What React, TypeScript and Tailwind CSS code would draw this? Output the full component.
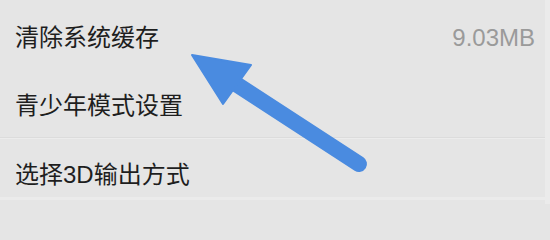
import React from "react";

const font = { fontFamily: '"Liberation Sans", "Noto Sans CJK SC", sans-serif' };

export default function App() {
  return (
    <div className="relative w-full min-w-[550px] min-h-screen bg-[#e5e5e5]" style={font}>
      <div className="relative w-[550px] h-[204px] overflow-hidden">
        <div className="flex flex-col pr-[5px] h-full">
          <div className="flex items-center justify-between h-[72px] pl-[15px] pr-[10px] pt-[4px]">
            <span className="text-[24px] leading-none text-[#1e1e1e]">清除系统缓存</span>
            <span className="text-[24px] leading-none text-[#9a9a9a]">9.03MB</span>
          </div>
          <div className="flex items-center h-[66px] pl-[15px] pt-[2px] border-b border-[#dcdcdc] shadow-[0_1px_0_#ececec]">
            <span className="text-[24px] leading-none text-[#1e1e1e]">青少年模式设置</span>
          </div>
          <div className="flex items-center h-[62px] pl-[15px] pt-[14px] border-b-[3px] border-[#ebebeb]">
            <span className="text-[24px] leading-none text-[#1e1e1e]">选择3D输出方式</span>
          </div>
          <div className="flex-1" />
        </div>
        <div className="absolute right-0 top-0 w-[5px] h-full bg-[#ebebeb]" />
        <svg className="absolute left-0 top-0" width="550" height="204" viewBox="0 0 550 204">
          <line x1="236" y1="84" x2="359" y2="164" stroke="#4a8be0" strokeWidth="16" strokeLinecap="round" />
          <polygon points="192,55 251,65 223,104" fill="#4a8be0" stroke="#4a8be0" strokeWidth="2" strokeLinejoin="round" />
        </svg>
      </div>
    </div>
  );
}
